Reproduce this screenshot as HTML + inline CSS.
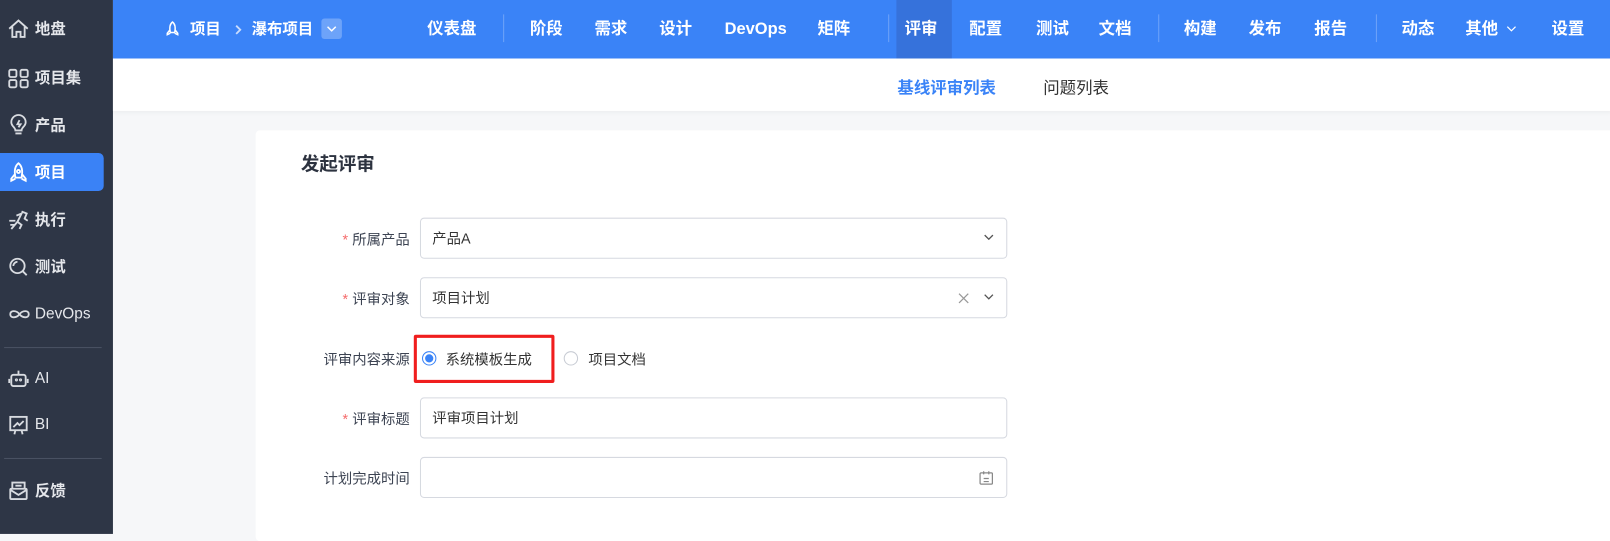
<!DOCTYPE html>
<html><head><meta charset="utf-8"><style>
*{margin:0;padding:0;box-sizing:border-box}
html,body{width:1610px;height:514px;overflow:hidden;background:#f6f7f9}
#w{position:absolute;left:0;top:0;width:1568px;height:501px;transform:scale(1.02679);transform-origin:0 0;font-family:"Liberation Sans","Noto Sans CJK SC",sans-serif}
.sb{position:absolute;left:0;top:0;width:110px;height:520px;background:#2e3646}
.si{position:absolute;left:0;width:101px;height:37px;color:#e5e7eb;font-size:15px;font-weight:bold;display:flex;align-items:center;padding-left:34px}
.si svg{position:absolute;left:7px;top:8px}
.si.act{background:#3a82f6;border-radius:0 5px 5px 0;color:#fff}
.sep{position:absolute;left:4px;width:95px;height:1px;background:#4a5263}
.top{position:absolute;left:110px;top:0;width:1460px;height:57px;background:#3a83f7}
.n{position:absolute;top:0;height:57px;line-height:57px;color:#fff;font-size:16px;font-weight:bold;transform:translateX(-50%);white-space:nowrap}
.vs{position:absolute;top:14px;width:1px;height:27px;background:#6ea3f9}
.sub{position:absolute;left:110px;top:57px;width:1460px;height:51px;background:#fff;box-shadow:0 2px 4px rgba(0,0,0,.04)}
.card{position:absolute;left:249px;top:127px;width:1330px;height:400px;background:#fff;border-radius:4px}
.lab{position:absolute;right:1169px;font-size:14px;color:#3c4352;white-space:nowrap}
.lab b{color:#f56c6c;font-weight:normal;margin-right:4px}
.inp{position:absolute;left:409px;width:572px;height:40px;border:1px solid #d6d9e0;border-radius:4px;font-size:14px;color:#333;padding-left:11px;line-height:38px}
.chev{position:absolute;right:12px;top:15px}
</style></head><body><div id="w">
<div class="sb">
<div class="si" style="top:9px"><svg width="22" height="22" viewBox="0 0 22 22" fill="none" stroke="#d8dbe0" stroke-width="1.8"><path d="M2 11L11 3l9 8M5 9v10h4v-5h4v5h4V9"/></svg>地盘</div>
<div class="si" style="top:57px"><svg width="22" height="22" viewBox="0 0 22 22" fill="none" stroke="#d8dbe0" stroke-width="1.8"><rect x="2" y="3" width="7" height="7" rx="1.5"/><rect x="13" y="3" width="7" height="7" rx="1.5"/><rect x="2" y="13" width="7" height="7" rx="1.5"/><rect x="13" y="13" width="7" height="7" rx="1.5"/></svg>项目集</div>
<div class="si" style="top:103px"><svg width="22" height="22" viewBox="0 0 22 22" fill="none" stroke="#d8dbe0" stroke-width="1.8"><path d="M8 16c0-3-4-4-4-8a7 7 0 0 1 14 0c0 4-4 5-4 8zM8 19h6M12 6l-2 4h3l-2 3"/></svg>产品</div>
<div class="si act" style="top:149px"><svg width="22" height="22" viewBox="0 0 22 22" fill="none" stroke="#fff" stroke-width="1.8"><path d="M11 2c4 3 4 9 3 14H8C7 11 7 5 11 2zM8 12l-4 5v2l4-2M14 12l4 5v2l-4-2"/><circle cx="11" cy="10" r="1.5"/></svg>项目</div>
<div class="si" style="top:195px"><svg width="22" height="22" viewBox="0 0 22 22" fill="none" stroke="#d8dbe0" stroke-width="1.8"><path d="M14 3l5 2-2 5 3 2M9 7l5-2-4 8 4 3-2 4M10 13l-6 7M2 12h6M3 16h5"/></svg>执行</div>
<div class="si" style="top:241px"><svg width="22" height="22" viewBox="0 0 22 22" fill="none" stroke="#d8dbe0" stroke-width="1.8"><circle cx="10" cy="10" r="7"/><path d="M15 15l4 4M6 10a4 4 0 0 1 4-4"/></svg>测试</div>
<div class="si" style="top:287px;font-weight:normal"><svg width="24" height="22" viewBox="0 0 24 22" fill="none" stroke="#d8dbe0" stroke-width="1.8"><path d="M12 11c-3-4-9-4-9 0s6 4 9 0 9-4 9 0-6 4-9 0z"/></svg>DevOps</div>
<div class="sep" style="top:338px"></div>
<div class="si" style="top:350px;font-weight:normal"><svg width="22" height="22" viewBox="0 0 22 22" fill="none" stroke="#d8dbe0" stroke-width="1.8"><rect x="4" y="7" width="14" height="11" rx="2"/><path d="M11 7V3M2 11v4M20 11v4"/><circle cx="9" cy="12" r=".6"/><circle cx="13" cy="12" r=".6"/></svg>AI</div>
<div class="si" style="top:395px;font-weight:normal"><svg width="22" height="22" viewBox="0 0 22 22" fill="none" stroke="#d8dbe0" stroke-width="1.8"><rect x="3" y="3" width="16" height="13"/><path d="M6 13l4-4 2 2 4-4M8 16l-1 4M14 16l1 4"/></svg>BI</div>
<div class="sep" style="top:446px"></div>
<div class="si" style="top:459px"><svg width="22" height="22" viewBox="0 0 22 22" fill="none" stroke="#d8dbe0" stroke-width="1.8"><rect x="3" y="9" width="16" height="10" rx="1"/><path d="M5 9V3h12v6M3 10l8 5 8-5M8 6h6"/></svg>反馈</div>
</div>
<div class="top">
<svg style="position:absolute;left:50px;top:18px" width="16" height="20" viewBox="0 0 22 22" fill="none" stroke="#fff" stroke-width="2"><path d="M11 2c4 3 4 9 3 14H8C7 11 7 5 11 2zM8 12l-4 5v2l4-2M14 12l4 5v2l-4-2"/></svg>
<div class="n" style="left:75px;transform:none;font-size:15px">项目</div>
<svg style="position:absolute;left:118px;top:24px" width="8" height="10" viewBox="0 0 8 10" fill="none" stroke="#c9dcfc" stroke-width="1.8"><path d="M2 1l4 4-4 4"/></svg>
<div class="n" style="left:135px;transform:none;font-size:15px">瀑布项目</div>
<div style="position:absolute;left:203px;top:18px;width:20px;height:20px;background:#6da3f9;border-radius:3px"><svg style="position:absolute;left:5px;top:7px" width="10" height="6" viewBox="0 0 10 6" fill="none" stroke="#fff" stroke-width="1.4"><path d="M1 1l4 4 4-4"/></svg></div>
<div class="n" style="left:330px">仪表盘</div>
<div class="vs" style="left:380px"></div>
<div class="n" style="left:422px">阶段</div>
<div class="n" style="left:485px">需求</div>
<div class="n" style="left:548px">设计</div>
<div class="n" style="left:626px">DevOps</div>
<div class="n" style="left:702px">矩阵</div>
<div class="vs" style="left:755px"></div>
<div style="position:absolute;left:763px;top:0;width:54px;height:57px;background:#3672db"></div>
<div class="n" style="left:787px">评审</div>
<div class="n" style="left:850px">配置</div>
<div class="n" style="left:915px">测试</div>
<div class="n" style="left:976px">文档</div>
<div class="vs" style="left:1018px"></div>
<div class="n" style="left:1059px">构建</div>
<div class="n" style="left:1122px">发布</div>
<div class="n" style="left:1186px">报告</div>
<div class="vs" style="left:1230px"></div>
<div class="n" style="left:1271px">动态</div>
<div class="n" style="left:1333px">其他</div>
<svg style="position:absolute;left:1357px;top:25px" width="10" height="6" viewBox="0 0 10 6" fill="none" stroke="#fff" stroke-width="1.2"><path d="M1 1l4 4 4-4"/></svg>
<div class="n" style="left:1417px">设置</div>
</div>
<div class="sub">
<div style="position:absolute;left:764px;top:15px;font-size:16px;font-weight:bold;color:#3a83f7">基线评审列表</div>
<div style="position:absolute;left:906px;top:15px;font-size:16px;color:#333">问题列表</div>
</div>
<div class="card"></div>
<div style="position:absolute;left:293px;top:146px;font-size:18px;font-weight:bold;color:#2d3340">发起评审</div>
<div class="lab" style="top:223px"><b>*</b>所属产品</div>
<div class="inp" style="top:212px">产品A<svg class="chev" width="10" height="6" viewBox="0 0 10 6" fill="none" stroke="#555" stroke-width="1.3"><path d="M1 1l4 4 4-4"/></svg></div>
<div class="lab" style="top:281px"><b>*</b>评审对象</div>
<div class="inp" style="top:270px">项目计划<svg style="position:absolute;right:36px;top:14px" width="11" height="11" viewBox="0 0 11 11" stroke="#999" stroke-width="1.2"><path d="M1 1l9 9M10 1l-9 9"/></svg><svg class="chev" width="10" height="6" viewBox="0 0 10 6" fill="none" stroke="#555" stroke-width="1.3"><path d="M1 1l4 4 4-4"/></svg></div>
<div class="lab" style="top:340px">评审内容来源</div>
<div style="position:absolute;left:411px;top:342px;width:14px;height:14px;border-radius:50%;border:1px solid #3a83f7;background:#fff"><div style="position:absolute;left:2px;top:2px;width:8px;height:8px;border-radius:50%;background:#3a83f7"></div></div>
<div style="position:absolute;left:434px;top:340px;font-size:14px;color:#333">系统模板生成</div>
<div style="position:absolute;left:549px;top:342px;width:14px;height:14px;border-radius:50%;border:1px solid #c8ccd4"></div>
<div style="position:absolute;left:573px;top:340px;font-size:14px;color:#333">项目文档</div>
<div style="position:absolute;left:403px;top:326px;width:137px;height:47px;border:3px solid #f01e1e;border-radius:2px"></div>
<div class="lab" style="top:398px"><b>*</b>评审标题</div>
<div class="inp" style="top:387px">评审项目计划</div>
<div class="lab" style="top:456px">计划完成时间</div>
<div class="inp" style="top:445px"><svg style="position:absolute;right:12px;top:12px" width="15" height="15" viewBox="0 0 15 15" fill="none" stroke="#888" stroke-width="1.2"><rect x="1.5" y="2.5" width="12" height="11" rx="1"/><path d="M5 1v3M10 1v3M5 8h5M5 11h5"/></svg></div>
</div></body></html>
